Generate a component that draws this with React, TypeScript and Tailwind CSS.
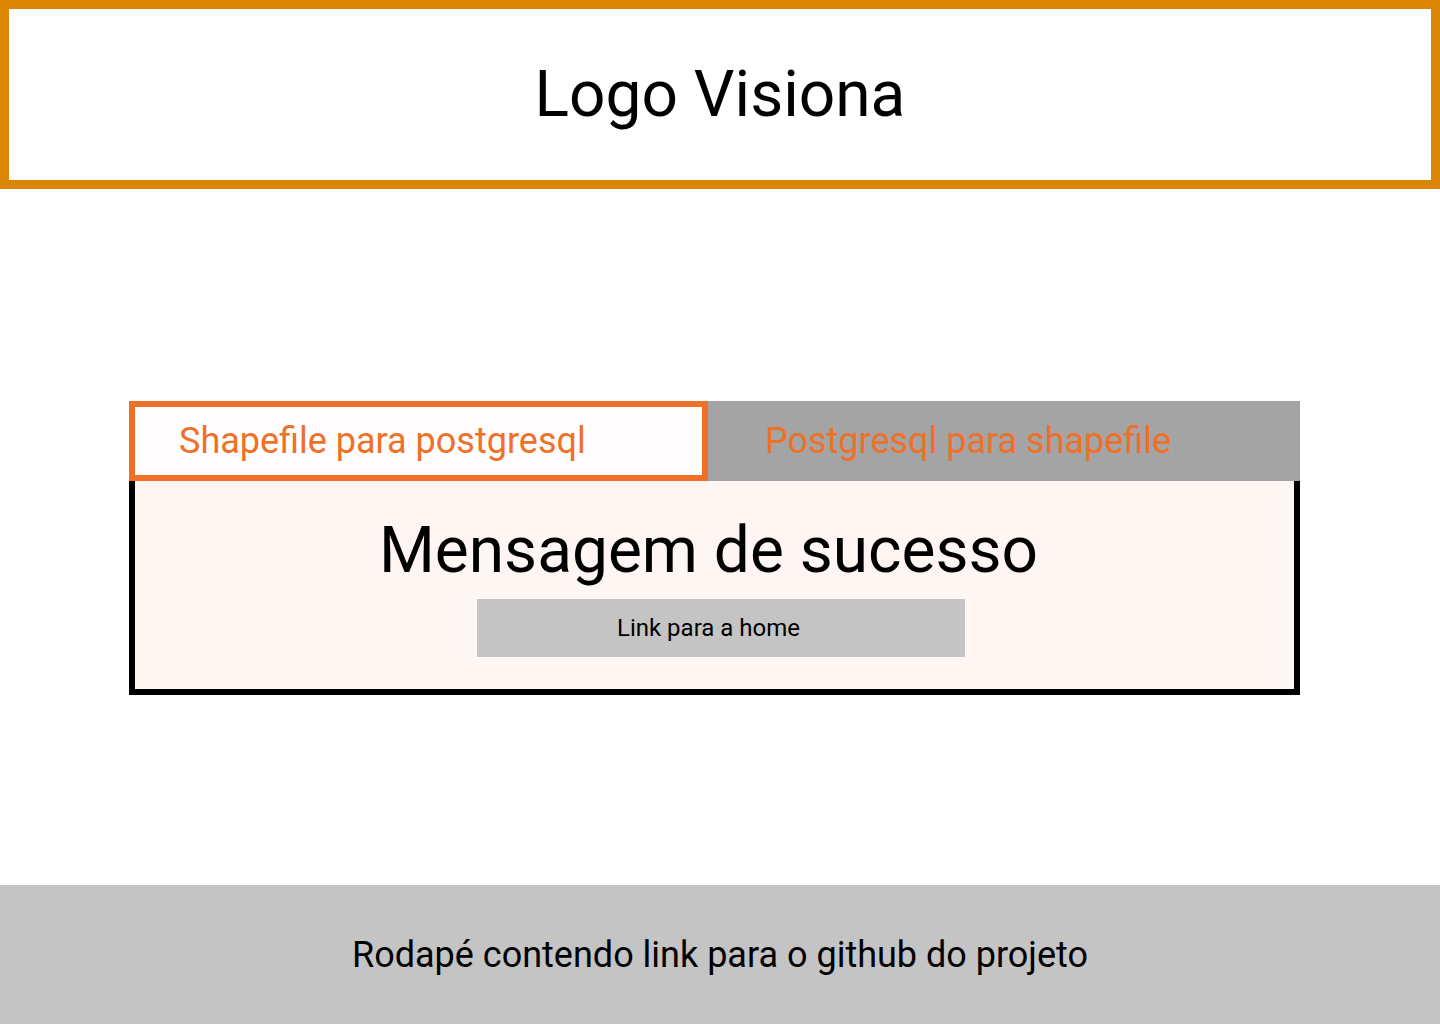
import React from "react";

export default function App() {
  return (
    <div className="flex min-h-screen w-[1440px] flex-col bg-white" style={{ fontFamily: "Roboto, 'Noto Sans', sans-serif" }}>
      <header className="flex h-[189px] items-center justify-center border-[9px] border-[#db8504] bg-white">
        <h1 className="text-[64px] leading-none font-normal text-black">Logo Visiona</h1>
      </header>
      <main className="flex-1 pt-[212px]">
        <div className="ml-[129px] w-[1171px]">
          <div className="flex h-[80px]">
            <div className="flex w-[579px] items-center border-[6px] border-[#ee7029] bg-[#fffdfd] pl-[44px]">
              <span className="text-[36px] leading-none text-[#ee7029]">Shapefile para postgresql</span>
            </div>
            <div className="flex flex-1 items-center bg-[#a4a4a4] pl-[57px]">
              <span className="text-[36px] leading-none text-[#ee7029]">Postgresql para shapefile</span>
            </div>
          </div>
          <div className="flex h-[214px] flex-col items-center border-x-[6px] border-b-[6px] border-black bg-[#fff5f3] pt-[38px]">
            <h2 className="mr-[12px] text-[64px] leading-none font-normal text-black">Mensagem de sucesso</h2>
            <button className="mt-[16px] ml-[13px] flex h-[58px] w-[488px] items-center justify-center bg-[#c4c4c4] pr-[25px] text-[24px] text-black">
              Link para a home
            </button>
          </div>
        </div>
      </main>
      <footer className="flex h-[139px] items-center justify-center bg-[#c4c4c4]">
        <p className="text-[36px] leading-none text-black">Rodapé contendo link para o github do projeto</p>
      </footer>
    </div>
  );
}
